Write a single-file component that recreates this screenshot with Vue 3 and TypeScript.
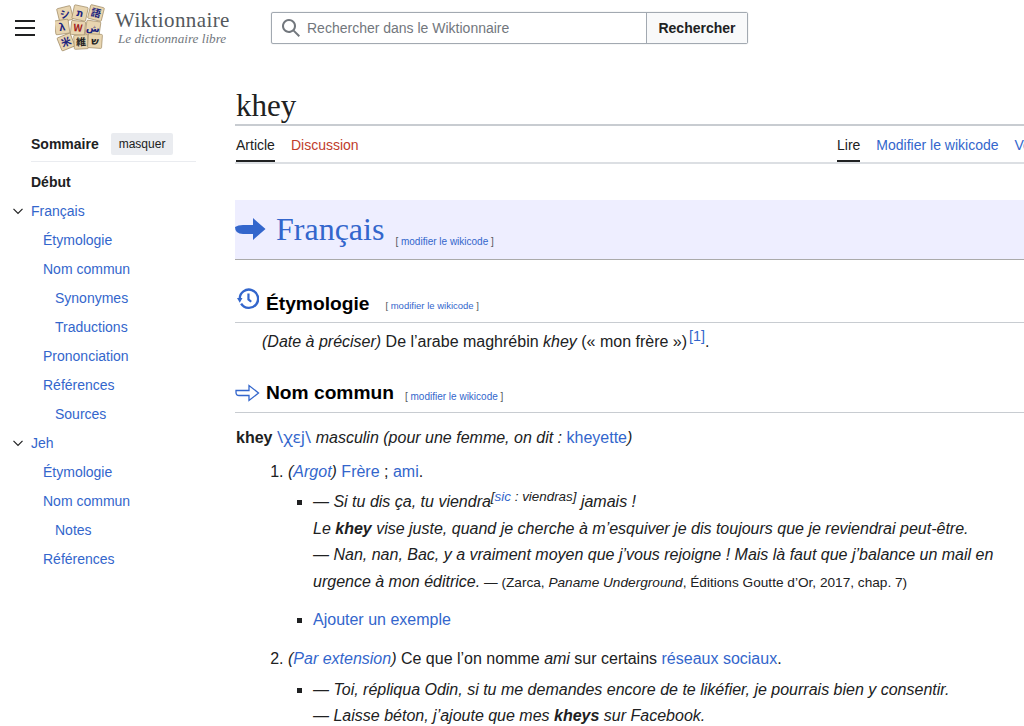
<script setup lang="ts">
interface TocItem { label: string; level: number; caret?: boolean; bold?: boolean }
const toc: TocItem[] = [
  { label: 'Début', level: 0, bold: true },
  { label: 'Français', level: 0, caret: true },
  { label: 'Étymologie', level: 1 },
  { label: 'Nom commun', level: 1 },
  { label: 'Synonymes', level: 2 },
  { label: 'Traductions', level: 2 },
  { label: 'Prononciation', level: 1 },
  { label: 'Références', level: 1 },
  { label: 'Sources', level: 2 },
  { label: 'Jeh', level: 0, caret: true },
  { label: 'Étymologie', level: 1 },
  { label: 'Nom commun', level: 1 },
  { label: 'Notes', level: 2 },
  { label: 'Références', level: 1 },
]
const tiles = [
  { x: 10, y: 11, r: -14, t: 'シ', c: '#1a237e' },
  { x: 25, y: 10, r: 12, t: 'ת', c: '#1a237e' },
  { x: 41, y: 10, r: 14, t: '語', c: '#1a237e' },
  { x: 7, y: 24, r: -8, t: 'λ', c: '#1a237e' },
  { x: 23, y: 25, r: 6, t: 'W', c: '#a02020' },
  { x: 38, y: 25, r: 8, t: 'ش', c: '#1a237e' },
  { x: 11, y: 39, r: -22, t: '米', c: '#1a237e' },
  { x: 26, y: 39, r: -3, t: '維', c: '#222' },
  { x: 40, y: 38, r: 4, t: 'ש', c: '#222' },
]
</script>

<template>
  <div class="page">
    <header class="top">
      <button class="burger" aria-label="menu"><span></span><span></span><span></span></button>
      <div class="logo">
        <svg class="logo-mark" width="50" height="50" viewBox="0 0 50 50">
          <g v-for="(t, i) in tiles" :key="i" :transform="`rotate(${t.r} ${t.x} ${t.y})`">
            <rect :x="t.x - 7" :y="t.y - 7" width="14" height="14" rx="1" fill="#e8d5b0" stroke="#a08a64" stroke-width="0.7" />
            <text :x="t.x" :y="t.y + 3.6" text-anchor="middle" class="tile" :fill="t.c">{{ t.t }}</text>
          </g>
        </svg>
        <div class="wordmark">
          <div class="wm-title">Wiktionnaire</div>
          <div class="wm-sub">Le dictionnaire libre</div>
        </div>
      </div>
      <form class="search" @submit.prevent>
        <div class="search-field">
          <svg width="20" height="20" viewBox="0 0 20 20"><path fill="#72777d" d="M12.2 13.6a7 7 0 1 1 1.4-1.4l5.4 5.4-1.4 1.4zM3 8a5 5 0 1 0 10 0A5 5 0 0 0 3 8"/></svg>
          <span class="ph">Rechercher dans le Wiktionnaire</span>
        </div>
        <div class="search-btn">Rechercher</div>
      </form>
    </header>

    <div class="columns">
      <aside class="side">
        <div class="toc-head">
          <strong>Sommaire</strong>
          <span class="hide">masquer</span>
        </div>
        <ul class="toc">
          <li v-for="(item, i) in toc" :key="i" :class="['lv' + item.level, { bold: item.bold }]">
            <svg v-if="item.caret" class="caret" width="12" height="12" viewBox="0 0 12 12"><path d="M1.5 3.8 6 8.3l4.5-4.5" fill="none" stroke="#202122" stroke-width="1.2"/></svg>
            {{ item.label }}
          </li>
        </ul>
      </aside>

      <main class="main">
        <h1 class="title">khey</h1>
        <nav class="tabs">
          <div class="tab-group">
            <span class="tab active">Article</span>
            <span class="tab red">Discussion</span>
          </div>
          <div class="tab-group right">
            <span class="tab active">Lire</span>
            <span class="tab link">Modifier le wikicode</span>
            <span class="tab link">Voir l’historique</span>
          </div>
        </nav>

        <section class="lang">
          <svg class="lang-arrow" width="31" height="23" viewBox="0 0 31 23"><path fill="#3366cc" d="M0 9Q3 7 8 7H18V0L30.500 11 18 22V16H8Q0 16 0 9z"/></svg>
          <span class="lang-name">Français</span>
          <span class="edit lang-edit">[ <a>modifier le wikicode</a> ]</span>
        </section>

        <h3 class="sec sec-ety">
          <svg class="ety-ico" width="22" height="22" viewBox="0 0 24 24"><path fill="none" stroke="#3366cc" stroke-width="2.6" d="M4.500 17A10 10 0 1 0 3 12"/><path fill="#3366cc" d="M0 11h6l-3 5z"/><path fill="none" stroke="#3366cc" stroke-width="2.4" d="M12.500 6v6.500l3 2.500"/></svg>
          <span class="sec-name ety-name">Étymologie</span>
          <span class="edit ety-edit">[ <a>modifier le wikicode</a> ]</span>
        </h3>
        <p class="ety"><i>(Date à préciser)</i> De l’arabe maghrébin <i>khey</i> (« mon frère »)<sup class="ref">[1]</sup>.</p>

        <h3 class="sec sec-nom">
          <svg width="25" height="18" viewBox="0 0 25 18"><path fill="none" stroke="#3366cc" stroke-width="1.3" d="M1 6.500h13V1.500L23.500 9 14 16.500v-5H4Q1 11.500 1 8.500z"/></svg>
          <span class="sec-name">Nom commun</span>
          <span class="edit nom-edit">[ <a>modifier le wikicode</a> ]</span>
        </h3>

        <p class="head"><b>khey</b> <a class="ipa">\χɛj\</a> <i>masculin (pour une femme, on dit :</i> <a>kheyette</a><i>)</i></p>

        <ol class="defs">
          <li>
            <i>(<a>Argot</a>)</i> <a>Frère</a> ; <a>ami</a>.
            <ul>
              <li>
                <i>— Si tu dis ça, tu viendra<sup class="sic">[<a>sic</a> : viendras]</sup> jamais !<br>
                Le <b>khey</b> vise juste, quand je cherche à m’esquiver je dis toujours que je reviendrai peut-être.<br>
                — Nan, nan, Bac, y a vraiment moyen que j’vous rejoigne ! Mais là faut que j’balance un mail en urgence à mon éditrice.</i>
                <small> — (Zarca, <i>Paname Underground</i>, Éditions Goutte d’Or, 2017, chap. 7)</small>
              </li>
              <li class="add"><a>Ajouter un exemple</a></li>
            </ul>
          </li>
          <li class="second">
            <i>(<a>Par extension</a>)</i> Ce que l’on nomme <i>ami</i> sur certains <a>réseaux sociaux</a>.
            <ul class="ul2">
              <li>
                <i>— Toi, répliqua Odin, si tu me demandes encore de te likéfier, je pourrais bien y consentir.<br>
                — Laisse béton, j’ajoute que mes <b>kheys</b> sur Facebook.</i>
              </li>
            </ul>
          </li>
        </ol>
      </main>
    </div>
  </div>
</template>

<style>
html, body { margin: 0; overflow: hidden; background: #fff; }
</style>

<style scoped>
.page { width: 1024px; height: 726px; overflow: hidden; font-family: "Liberation Sans", Arial, sans-serif; color: #202122; font-size: 16px; }
a { color: #3366cc; }
.top { display: flex; align-items: center; height: 56px; }
.burger { width: 20px; height: 16px; margin-left: 15px; padding: 0; border: 0; background: none; display: flex; flex-direction: column; justify-content: space-between; flex: none; }
.burger span { display: block; height: 2px; background: #202122; }
.logo { display: flex; align-items: center; margin-left: 20px; width: 216px; flex: none; }
.logo-mark { flex: none; margin-top: -1px; }
.tile { font-size: 10px; font-family: "Noto Sans CJK JP", "DejaVu Sans", sans-serif; font-weight: 700; }
.wordmark { margin-left: 10px; color: #54595d; font-family: "Liberation Serif", serif; }
.wm-title { font-size: 21px; line-height: 21px; letter-spacing: .4px; }
.wm-sub { font-size: 13.2px; line-height: 15px; font-style: italic; color: #72777d; margin-left: 3px; }
.search { display: flex; width: 477px; height: 32px; box-sizing: border-box; border: 1px solid #a2a9b1; border-radius: 2px; box-shadow: 0 0 1px #a2a9b1; }
.search-field { flex: 1; display: flex; align-items: center; padding-left: 9px; gap: 6px; }
.ph { font-size: 14px; color: #72777d; }
.search-btn { width: 100px; background: #f8f9fa; border-left: 1px solid #a2a9b1; text-align: center; font-weight: 700; font-size: 14px; line-height: 30px; }
.columns { display: flex; }
.side { flex: none; padding-left: 31px; width: 165px; font-size: 14px; }
.toc-head { display: flex; align-items: center; gap: 12px; height: 32px; margin-top: 72px; padding-bottom: 1px; border-bottom: 1px solid #eaecf0; }
.toc-head strong { font-size: 14px; }
.hide { background: #eaecf0; border-radius: 2px; font-size: 12px; padding: 4px 8px; line-height: 14px; }
.toc { list-style: none; margin: 6px 0 0; padding: 0; }
.toc li { height: 29px; line-height: 29px; color: #3366cc; position: relative; font-size: 14px; }
.toc li.bold { font-weight: 700; color: #202122; }
.toc li.lv1 { padding-left: 12px; }
.toc li.lv2 { padding-left: 24px; }
.caret { position: absolute; left: -19px; top: 8px; }
.main { width: 900px; margin-left: 39px; flex: none; }
.title { font-family: "Liberation Serif", serif; font-weight: 400; font-size: 31px; line-height: 36px; margin: 0; box-sizing: border-box; padding: 32px 0 0 1px; border-bottom: 2px solid #c8ccd1; height: 70px; }
.tabs { display: flex; justify-content: space-between; height: 38px; border-bottom: 2px solid #dcdfe3; font-size: 14px; box-sizing: border-box; padding-left: 1px; }
.tab-group { display: flex; gap: 16px; }
.tab-group.right { position: absolute; left: 837px; white-space: nowrap; }
.tab { line-height: 38px; height: 36px; box-sizing: border-box; }
.tab.active { border-bottom: 2px solid #202122; }
.tab.red { color: #bf3c2c; }
.tab.link { color: #3366cc; }
.lang { display: flex; align-items: center; height: 60px; box-sizing: border-box; margin-top: 36px; background: #eeeeff; border-bottom: 1px solid #aaa; }
.lang-arrow { flex: none; }
.lang-name { font-family: "Liberation Serif", serif; color: #3366cc; font-size: 32px; margin-left: 10px; }
.edit { font-size: 10px; font-weight: 400; color: #54595d; font-family: "Liberation Sans", sans-serif; margin-left: 10px; }
.lang-edit { margin-top: 24px; margin-left: 11px; }
.sec { display: flex; align-items: center; margin: 0; border-bottom: 1px solid #c8ccd1; font-size: 19.2px; color: #000; }
.sec-ety { margin-top: 26px; height: 36px; }
.sec-nom { margin-top: 22px; height: 38px; }
.sec-name { margin-left: 6px; font-weight: 700; }
.ety-ico { flex: none; margin-left: 2px; margin-top: -11px; }
.ety-name { margin-left: 7px; }
.ety-edit { font-size: 9.5px; margin-left: 16px; margin-top: 2px; }
.nom-edit { margin-left: 11px; margin-top: 6px; }
.ety { margin: 0; padding: 9px 0 0 27px; line-height: 20px; font-size: 16px; }
.ref { font-size: 14.4px; line-height: 0; color: #3366cc; margin-left: 2px; }
.head { margin: 14px 0 0 1px; line-height: 20px; }
.ipa { font-family: "Noto Sans", sans-serif; font-size: 16.5px; }
.defs { margin: 14px 0 0; padding: 0 0 0 53px; width: 789px; box-sizing: border-box; }
.defs > li { line-height: 20px; }
.defs ul { list-style: square; margin: 7px 0 0; padding: 0 0 0 25px; }
.defs ul.ul2 { margin-top: 8px; }
.defs ul li { margin-bottom: 10px; line-height: 26.5px; }
.sic { font-size: 13.4px; line-height: 0; }
small { font-size: 13.65px; }
.defs ul li.add { margin-top: 11px; }
.second { margin-top: 15px; }
</style>
